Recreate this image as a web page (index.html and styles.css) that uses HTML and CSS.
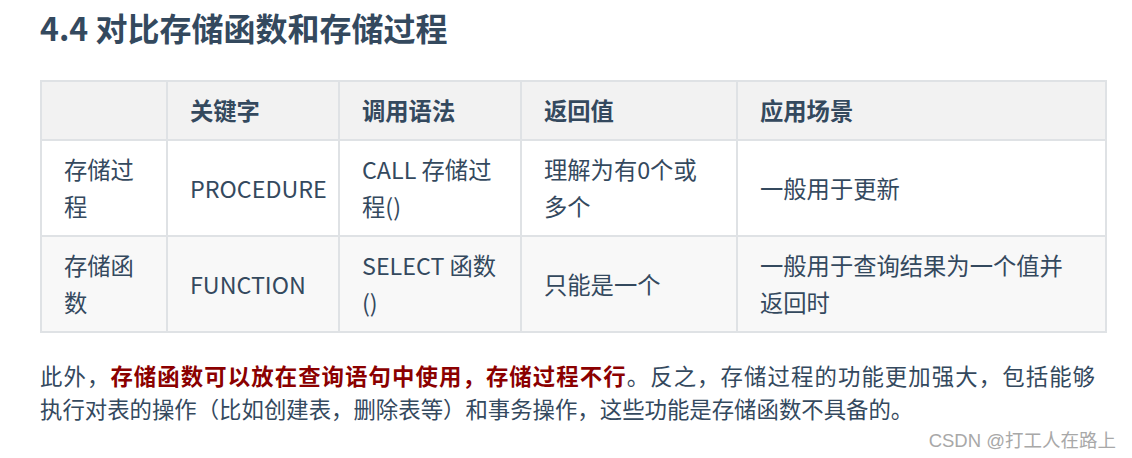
FILE: index.html
```html
<!DOCTYPE html>
<html lang="zh-CN">
<head>
<meta charset="utf-8">
<title>4.4 对比存储函数和存储过程</title>
<link rel="stylesheet" href="styles.css">
</head>
<body>
<main class="page">
  <h3 class="title">4.4 对比存储函数和存储过程</h3>
  <table class="compare">
    <colgroup>
      <col class="c1"><col class="c2"><col class="c3"><col class="c4"><col class="c5">
    </colgroup>
    <thead>
      <tr><th></th><th>关键字</th><th>调用语法</th><th>返回值</th><th>应用场景</th></tr>
    </thead>
    <tbody>
      <tr><td>存储过程</td><td>PROCEDURE</td><td>CALL 存储过程()</td><td>理解为有0个或多个</td><td>一般用于更新</td></tr>
      <tr class="alt"><td>存储函数</td><td>FUNCTION</td><td>SELECT 函数 ()</td><td>只能是一个</td><td>一般用于查询结果为一个值并返回时</td></tr>
    </tbody>
  </table>
  <p class="note"><span class="first-line">此外，<strong class="hl">存储函数可以放在查询语句中使用，存储过程不行</strong>。反之，存储过程的功能更加强大，包括能够</span>执行对表的操作（比如创建表，删除表等）和事务操作，这些功能是存储函数不具备的。</p>
  <div class="watermark">CSDN @打工人在路上</div>
</main>
</body>
</html>
```

FILE: styles.css
```css
html, body {
  margin: 0;
  padding: 0;
  background: #ffffff;
}

.page {
  position: relative;
  width: 1132px;
  height: 458px;
  box-sizing: border-box;
  padding: 8px 27px 0 40px;
  font-family: "Noto Sans CJK SC", "Noto Sans", sans-serif;
  color: #34495e;
  overflow: hidden;
}

.title {
  margin: 0 0 34px 0;
  font-size: 32px;
  line-height: 38px;
  font-weight: 700;
  color: #34495e;
}

.compare {
  border-collapse: collapse;
  table-layout: fixed;
  width: 1065px;
  font-size: 23.3px;
  line-height: 37px;
  color: #34495e;
}

.compare .c1 { width: 126px; }
.compare .c2 { width: 172px; }
.compare .c3 { width: 182px; }
.compare .c4 { width: 216px; }
.compare .c5 { width: 369px; }

.compare th,
.compare td {
  border: 2px solid #dfe2e5;
  padding: 10px 22px;
  text-align: left;
  vertical-align: middle;
}

.compare th {
  font-weight: 700;
  background: #f2f2f2;
}

.compare tbody tr {
  background: #ffffff;
}

.compare tbody tr.alt {
  background: #f8f8f8;
}

.note {
  margin: 26px 0 0 0;
  width: 1055px;
  font-size: 22.4px;
  line-height: 33px;
  color: #34495e;
}

.first-line {
  display: block;
  text-align: justify;
  text-align-last: justify;
}

.hl {
  color: #8b0000;
  font-weight: 700;
}

.watermark {
  position: absolute;
  right: 16px;
  bottom: 6px;
  font-family: "Liberation Sans", "Noto Sans CJK SC", sans-serif;
  font-size: 18.5px;
  line-height: 22px;
  color: #a8a8a8;
}
```
